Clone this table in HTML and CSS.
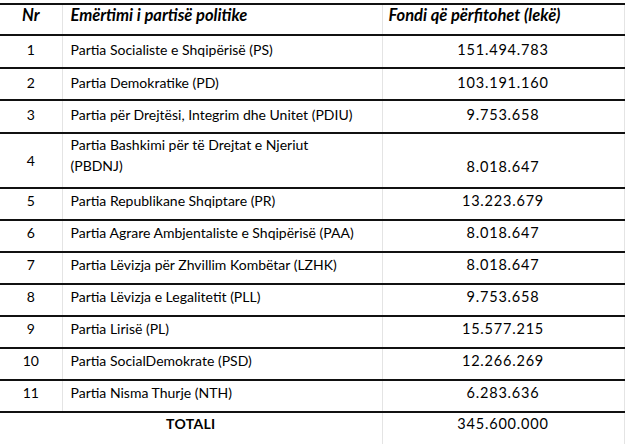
FILE: index.html
```html
<!DOCTYPE html>
<html>
<head>
<meta charset="utf-8">
<link rel="stylesheet" href="styles.css">
</head>
<body>
<table class="funds">
  <colgroup><col class="c-nr"><col class="c-name"><col class="c-val"></colgroup>
  <tr class="head">
    <th class="nr">Nr</th>
    <th class="name">Emërtimi i partisë politike</th>
    <th class="val">Fondi që përfitohet (lekë)</th>
  </tr>
  <tr class="top"><td class="nr">1</td><td class="name">Partia Socialiste e Shqipërisë (PS)</td><td class="val">151.494.783</td></tr>
  <tr class="top"><td class="nr">2</td><td class="name">Partia Demokratike (PD)</td><td class="val">103.191.160</td></tr>
  <tr class="top"><td class="nr">3</td><td class="name">Partia për Drejtësi, Integrim dhe Unitet (PDIU)</td><td class="val">9.753.658</td></tr>
  <tr class="tall"><td class="nr mid">4</td><td class="name">Partia Bashkimi për të Drejtat e Njeriut<br>(PBDNJ)</td><td class="val low">8.018.647</td></tr>
  <tr><td class="nr">5</td><td class="name">Partia Republikane Shqiptare (PR)</td><td class="val">13.223.679</td></tr>
  <tr><td class="nr">6</td><td class="name">Partia Agrare Ambjentaliste e Shqipërisë (PAA)</td><td class="val">8.018.647</td></tr>
  <tr><td class="nr">7</td><td class="name">Partia Lëvizja për Zhvillim Kombëtar (LZHK)</td><td class="val">8.018.647</td></tr>
  <tr><td class="nr">8</td><td class="name">Partia Lëvizja e Legalitetit (PLL)</td><td class="val">9.753.658</td></tr>
  <tr><td class="nr">9</td><td class="name">Partia Lirisë (PL)</td><td class="val">15.577.215</td></tr>
  <tr><td class="nr">10</td><td class="name">Partia SocialDemokrate (PSD)</td><td class="val">12.266.269</td></tr>
  <tr><td class="nr">11</td><td class="name">Partia Nisma Thurje (NTH)</td><td class="val">6.283.636</td></tr>
  <tr class="total"><td class="label" colspan="2">TOTALI</td><td class="val">345.600.000</td></tr>
</table>
</body>
</html>
```

FILE: styles.css
```css
html, body {
  margin: 0;
  padding: 0;
  background: #fff;
}
body {
  padding-top: 3px;
  font-family: Lato, "Liberation Sans", sans-serif;
  font-size: 14px;
  color: #000;
}
.funds {
  border-collapse: collapse;
  table-layout: fixed;
  width: 624px;
}
.c-nr { width: 62px; }
.c-name { width: 320px; }
.c-val { width: 242px; }
.funds th, .funds td {
  border-top: 2px solid #111;
  border-left: 1.5px solid #111;
  border-right: 1px solid #e4e4e4;
  padding: 1px 0 0 0;
  line-height: 21px;
  vertical-align: top;
  height: 32px;
  box-sizing: border-box;
  white-space: nowrap;
}
.funds .top td { height: 32.5px; padding-top: 3px; }
.funds th.nr, .funds td.nr {
  border-left: none;
  text-align: center;
}
.funds .name { padding-left: 8px; text-align: left; }
.funds td.val {
  text-align: center;
  letter-spacing: 0.8px;
  font-size: 14.5px;
}
.funds th.val { text-align: left; padding-left: 6px; }
.head th {
  font-weight: bold;
  font-style: italic;
  font-size: 16.5px;
  height: 31px;
  padding-top: 0;
}
.funds .tall td { height: 55.5px; padding-top: 0; }
.funds .tall td.mid { vertical-align: middle; padding-top: 0; }
.funds .tall td.low { padding-top: 22px; }
.funds .total td { padding-top: 0; }
.funds td.label {
  border-left: none;
  text-align: center;
  font-weight: bold;
  letter-spacing: 0.3px;
}
```
